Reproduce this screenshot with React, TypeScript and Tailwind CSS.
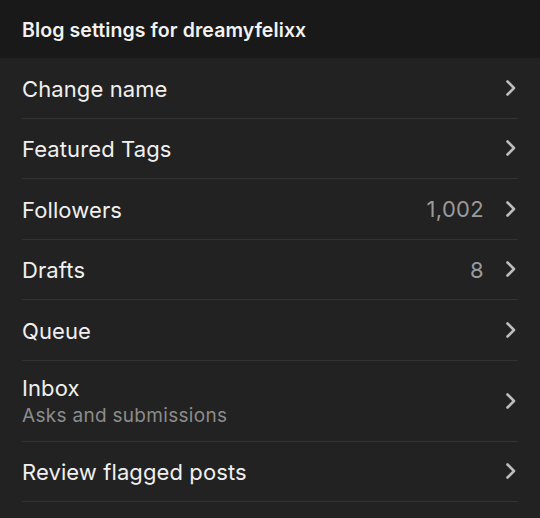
import React from "react";

type Row = { label: string; sub?: string; count?: string };

const rows: Row[] = [
  { label: "Change name" },
  { label: "Featured Tags" },
  { label: "Followers", count: "1,002" },
  { label: "Drafts", count: "8" },
  { label: "Queue" },
  { label: "Inbox", sub: "Asks and submissions" },
  { label: "Review flagged posts" },
];

function Chevron() {
  return (
    <svg width="14" height="18" viewBox="0 0 14 18" className="shrink-0">
      <path d="M3.5 2.5 L10 9 L3.5 15.5" fill="none" stroke="#bdbdbd" strokeWidth="2.6" strokeLinecap="round" strokeLinejoin="round" />
    </svg>
  );
}

export default function App() {
  return (
    <div className="h-[518px] w-[540px] overflow-hidden bg-[#222222] font-['Inter',sans-serif] text-white">
      <div className="flex h-[58px] items-center bg-[#191919] px-[22px] pt-[3px]">
        <h1 className="text-[19.5px] font-semibold tracking-[0.1px] text-[#f2f2f2]">Blog settings for dreamyfelixx</h1>
      </div>
      <ul className="px-[22px]">
        {rows.map((r) => (
          <li
            key={r.label}
            className={`flex items-center border-b border-[#333333] ${r.sub ? "h-[81px]" : "h-[60.5px]"}`}
          >
            <div className="flex flex-1 flex-col pt-[2px]">
              <span className="text-[22px] leading-[26px] tracking-[0.1px] text-[#f0f0f0]">{r.label}</span>
              {r.sub && <span className="mt-[3px] text-[19px] leading-[24px] tracking-[0.3px] text-[#8c8c8c]">{r.sub}</span>}
            </div>
            {r.count && <span className="mr-[20px] pt-[2px] text-[22px] tracking-[0.3px] text-[#9a9a9a]">{r.count}</span>}
            <Chevron />
          </li>
        ))}
        <li className="h-[60px]" />
      </ul>
    </div>
  );
}
